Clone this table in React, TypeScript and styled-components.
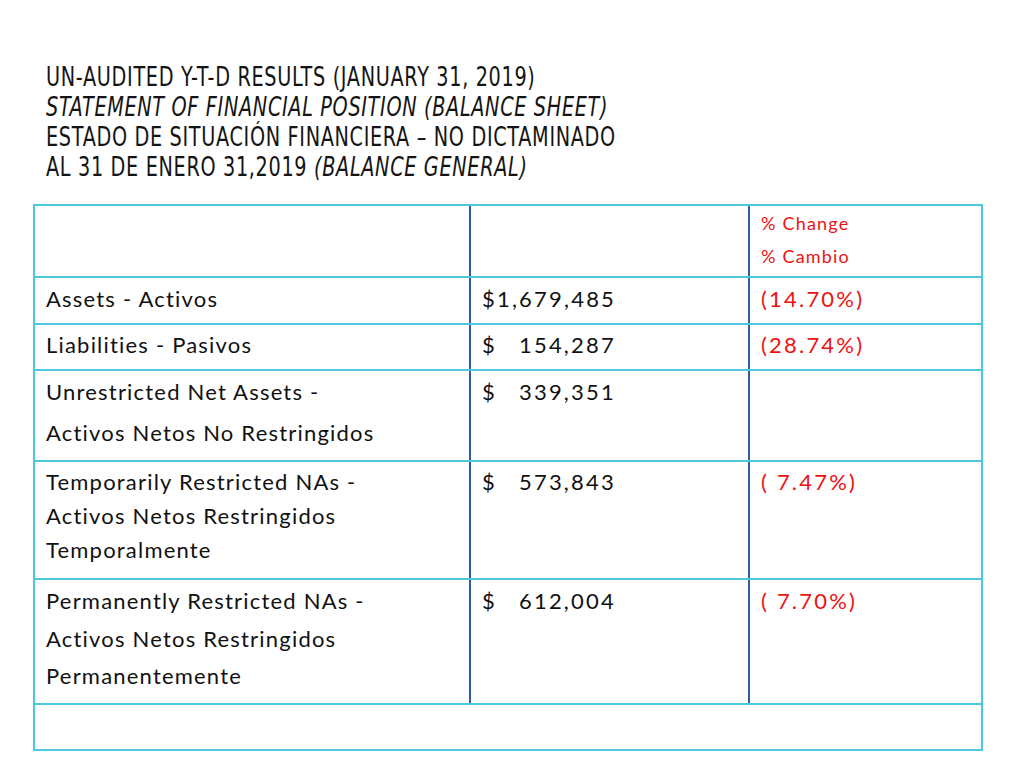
import React from 'react';
import styled, { createGlobalStyle } from 'styled-components';

const GlobalStyle = createGlobalStyle`
  html, body {
    margin: 0;
    padding: 0;
    background: #ffffff;
  }
  body {
    width: 1024px;
    height: 768px;
    overflow: hidden;
  }
`;

type Row = {
  height: number;
  pad: number;
  lh: number;
  label: string[];
  dollar?: string;
  amount?: string;
  gap?: number;
  change?: string;
};

const rows: Row[] = [
  { height: 47, pad: 6, lh: 30, label: ['Assets - Activos'], dollar: '$', amount: '1,679,485', gap: 0, change: '(14.70%)' },
  { height: 46, pad: 5, lh: 30, label: ['Liabilities - Pasivos'], dollar: '$', amount: '154,287', gap: 22, change: '(28.74%)' },
  { height: 91, pad: 0, lh: 41, label: ['Unrestricted Net Assets -', 'Activos Netos No Restringidos'], dollar: '$', amount: '339,351', gap: 22 },
  {
    height: 118,
    pad: 3,
    lh: 34,
    label: ['Temporarily Restricted NAs -', 'Activos Netos Restringidos', 'Temporalmente'],
    dollar: '$',
    amount: '573,843',
    gap: 22,
    change: '( 7.47%)',
  },
  {
    height: 125,
    pad: 2,
    lh: 37.5,
    label: ['Permanently Restricted NAs -', 'Activos Netos Restringidos', 'Permanentemente'],
    dollar: '$',
    amount: '612,004',
    gap: 22,
    change: '( 7.70%)',
  },
];

const App = () => {
  return (
    <Slide>
      <GlobalStyle />
      <Title>
        <TitleLine>UN-AUDITED Y-T-D RESULTS (JANUARY 31, 2019)</TitleLine>
        <TitleLine>
          <em>STATEMENT OF FINANCIAL POSITION (BALANCE SHEET)</em>
        </TitleLine>
        <TitleLine>ESTADO DE SITUACIÓN FINANCIERA – NO DICTAMINADO</TitleLine>
        <TitleLine>
          AL 31 DE ENERO 31,2019 <em>(BALANCE GENERAL)</em>
        </TitleLine>
      </Title>

      <Table>
        <TableRow height={70} first>
          <Cell pad={1} lh={33} />
          <Cell pad={1} lh={33} divider />
          <Cell pad={1} lh={33} divider>
            <HeaderNote>% Change</HeaderNote>
            <HeaderNote>% Cambio</HeaderNote>
          </Cell>
        </TableRow>

        {rows.map((r) => (
          <TableRow key={r.label[0]} height={r.height}>
            <Cell pad={r.pad} lh={r.lh}>
              {r.label.map((l) => (
                <div key={l}>{l}</div>
              ))}
            </Cell>
            <Cell pad={r.pad} lh={r.lh} divider>
              <Figure>{r.dollar}</Figure>
              <Figure gap={r.gap ?? 0}>{r.amount}</Figure>
            </Cell>
            <Cell pad={r.pad} lh={r.lh} divider>
              {r.change && <Change>{r.change}</Change>}
            </Cell>
          </TableRow>
        ))}

        <EmptyRow />
      </Table>
    </Slide>
  );
};

export default App;

const Slide = styled.div`
  width: 1024px;
  height: 768px;
  background: #ffffff;
  padding-top: 62px;
  box-sizing: border-box;
`;

const Title = styled.div`
  margin-left: 46px;
  font-family: 'DejaVu Sans', sans-serif;
  font-size: 26px;
  letter-spacing: 0.9px;
  color: #141414;
  line-height: 30px;
  height: 142px;
  transform: scaleX(0.74);
  transform-origin: left top;

  em {
    font-style: italic;
  }
`;

const TitleLine = styled.div`
  white-space: nowrap;
`;

const Table = styled.div`
  margin-left: 33px;
  width: 950px;
  border: 2px solid #4cc9dc;
  box-sizing: border-box;
  font-family: 'Lato', 'Noto Sans', sans-serif;
  font-size: 22px;
  letter-spacing: 1.2px;
  color: #111111;
`;

const TableRow = styled.div<{ height: number; first?: boolean }>`
  display: grid;
  grid-template-columns: 434px 279px 233px;
  height: ${(p) => p.height}px;
  box-sizing: border-box;
  border-top: ${(p) => (p.first ? 'none' : '2px solid #4cc9dc')};
`;

const Cell = styled.div<{ pad: number; lh: number; divider?: boolean }>`
  box-sizing: border-box;
  padding: ${(p) => p.pad}px 8px 0 11px;
  line-height: ${(p) => p.lh}px;
  border-left: ${(p) => (p.divider ? '2px solid #2f5f9e' : 'none')};
  white-space: nowrap;
`;

const Figure = styled.span<{ gap?: number }>`
  margin-left: ${(p) => p.gap ?? 0}px;
  letter-spacing: 2.2px;
`;

const Change = styled.span`
  color: #ee1111;
  letter-spacing: 2.2px;
  white-space: pre;
`;

const HeaderNote = styled.div`
  color: #ee1111;
  font-size: 18px;
  letter-spacing: 1.2px;
`;

const EmptyRow = styled.div`
  height: 46px;
  border-top: 2px solid #4cc9dc;
  box-sizing: border-box;
`;
